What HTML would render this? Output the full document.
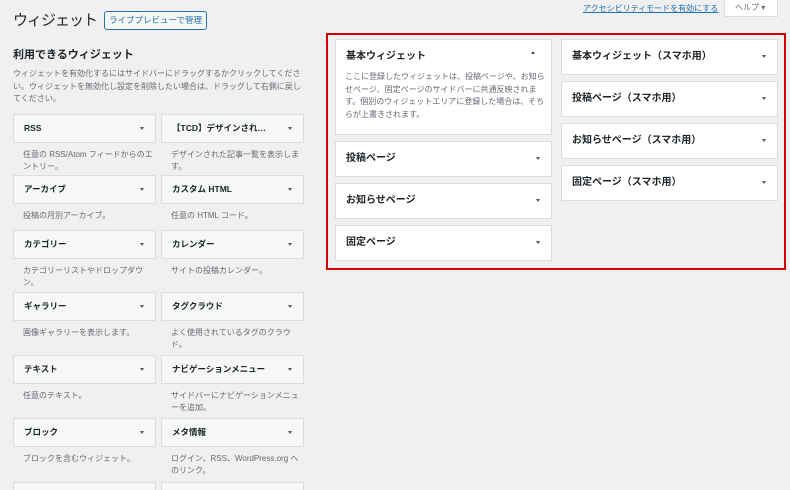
<!DOCTYPE html>
<html><head><meta charset="utf-8"><style>
*{margin:0;padding:0;box-sizing:border-box}
html,body{width:790px;height:490px;overflow:hidden}
body{background:#f0f0f1;font-family:"Liberation Sans","Noto Sans CJK JP",sans-serif;color:#1d2327;position:relative}
.a{position:absolute}
h1{position:absolute;left:13px;top:9px;font-size:15px;letter-spacing:-1px;font-weight:400;white-space:nowrap}
.btn{left:104px;top:11px;width:103px;height:19px;border:1px solid #2271b1;border-radius:3px;color:#2271b1;font-size:8.5px;line-height:17px;text-align:center;background:#f6f7f7}
.w{position:absolute;width:143px;height:29px;background:#f6f7f7;border:1px solid #dcdcde;font-size:8.5px;font-weight:700;line-height:27px;padding-left:10px}
.w:after,.b:after{content:"";position:absolute;right:11px;top:12px;border-left:2.5px solid transparent;border-right:2.5px solid transparent;border-top:3.5px solid #50575e}
.d{position:absolute;font-size:8px;color:#646970;line-height:11.5px;width:130px}
.b{position:absolute;width:217px;height:36px;background:#fff;border:1px solid #dcdcde;font-size:10px;font-weight:700;line-height:34px;padding-left:10px}
.b:after{top:15px}
.b.top:after{display:none}
</style></head><body>
<h1>ウィジェット</h1>
<div class="a btn">ライブプレビューで管理</div>
<div class="a" style="left:583px;top:3px;font-size:8px;color:#2271b1;text-decoration:underline">アクセシビリティモードを有効にする</div>
<div class="a" style="left:724px;top:0;width:54px;height:17px;background:#fff;border:1px solid #dcdcde;border-top:none;font-size:8px;color:#646970;line-height:16px;padding-left:10px">ヘルプ ▾</div>
<div class="a" style="left:13px;top:46px;font-size:11px;font-weight:700">利用できるウィジェット</div>
<div class="a" style="left:13px;top:68px;width:292px;font-size:8px;color:#646970;line-height:12.5px">ウィジェットを有効化するにはサイドバーにドラッグするかクリックしてください。ウィジェットを無効化し設定を削除したい場合は、ドラッグして右側に戻してください。</div>

<div class="w" style="left:13px;top:114px">RSS</div>
<div class="w" style="left:161px;top:114px">【TCD】デザインされ…</div>
<div class="d" style="left:23px;top:149px">任意の RSS/Atom フィードからのエントリー。</div>
<div class="d" style="left:171px;top:149px">デザインされた記事一覧を表示します。</div>

<div class="w" style="left:13px;top:175px">アーカイブ</div>
<div class="w" style="left:161px;top:175px">カスタム HTML</div>
<div class="d" style="left:23px;top:210px">投稿の月別アーカイブ。</div>
<div class="d" style="left:171px;top:210px">任意の HTML コード。</div>

<div class="w" style="left:13px;top:230px">カテゴリー</div>
<div class="w" style="left:161px;top:230px">カレンダー</div>
<div class="d" style="left:23px;top:265px">カテゴリーリストやドロップダウン。</div>
<div class="d" style="left:171px;top:265px">サイトの投稿カレンダー。</div>

<div class="w" style="left:13px;top:292px">ギャラリー</div>
<div class="w" style="left:161px;top:292px">タグクラウド</div>
<div class="d" style="left:23px;top:327px">画像ギャラリーを表示します。</div>
<div class="d" style="left:171px;top:327px">よく使用されているタグのクラウド。</div>

<div class="w" style="left:13px;top:355px">テキスト</div>
<div class="w" style="left:161px;top:355px">ナビゲーションメニュー</div>
<div class="d" style="left:23px;top:390px">任意のテキスト。</div>
<div class="d" style="left:171px;top:390px">サイドバーにナビゲーションメニューを追加。</div>

<div class="w" style="left:13px;top:418px">ブロック</div>
<div class="w" style="left:161px;top:418px">メタ情報</div>
<div class="d" style="left:23px;top:453px">ブロックを含むウィジェット。</div>
<div class="d" style="left:171px;top:453px">ログイン、RSS、WordPress.org へのリンク。</div>

<div class="w" style="left:13px;top:482px"></div>
<div class="w" style="left:161px;top:482px"></div>

<div class="a" style="left:326px;top:33px;width:460px;height:237px;border:2px solid #d40000"></div>

<div class="b top" style="left:335px;top:39px;height:96px">基本ウィジェット</div>
<div class="a" style="left:531px;top:51px;border-left:2.5px solid transparent;border-right:2.5px solid transparent;border-bottom:3.5px solid #50575e"></div>
<div class="d" style="left:345px;top:71px;width:200px;line-height:12.5px">ここに登録したウィジェットは、投稿ページや、お知らせページ、固定ページのサイドバーに共通反映されます。個別のウィジェットエリアに登録した場合は、そちらが上書きされます。</div>
<div class="b" style="left:335px;top:141px">投稿ページ</div>
<div class="b" style="left:335px;top:183px">お知らせページ</div>
<div class="b" style="left:335px;top:225px">固定ページ</div>

<div class="b" style="left:561px;top:39px">基本ウィジェット（スマホ用）</div>
<div class="b" style="left:561px;top:81px">投稿ページ（スマホ用）</div>
<div class="b" style="left:561px;top:123px">お知らせページ（スマホ用）</div>
<div class="b" style="left:561px;top:165px">固定ページ（スマホ用）</div>
</body></html>
